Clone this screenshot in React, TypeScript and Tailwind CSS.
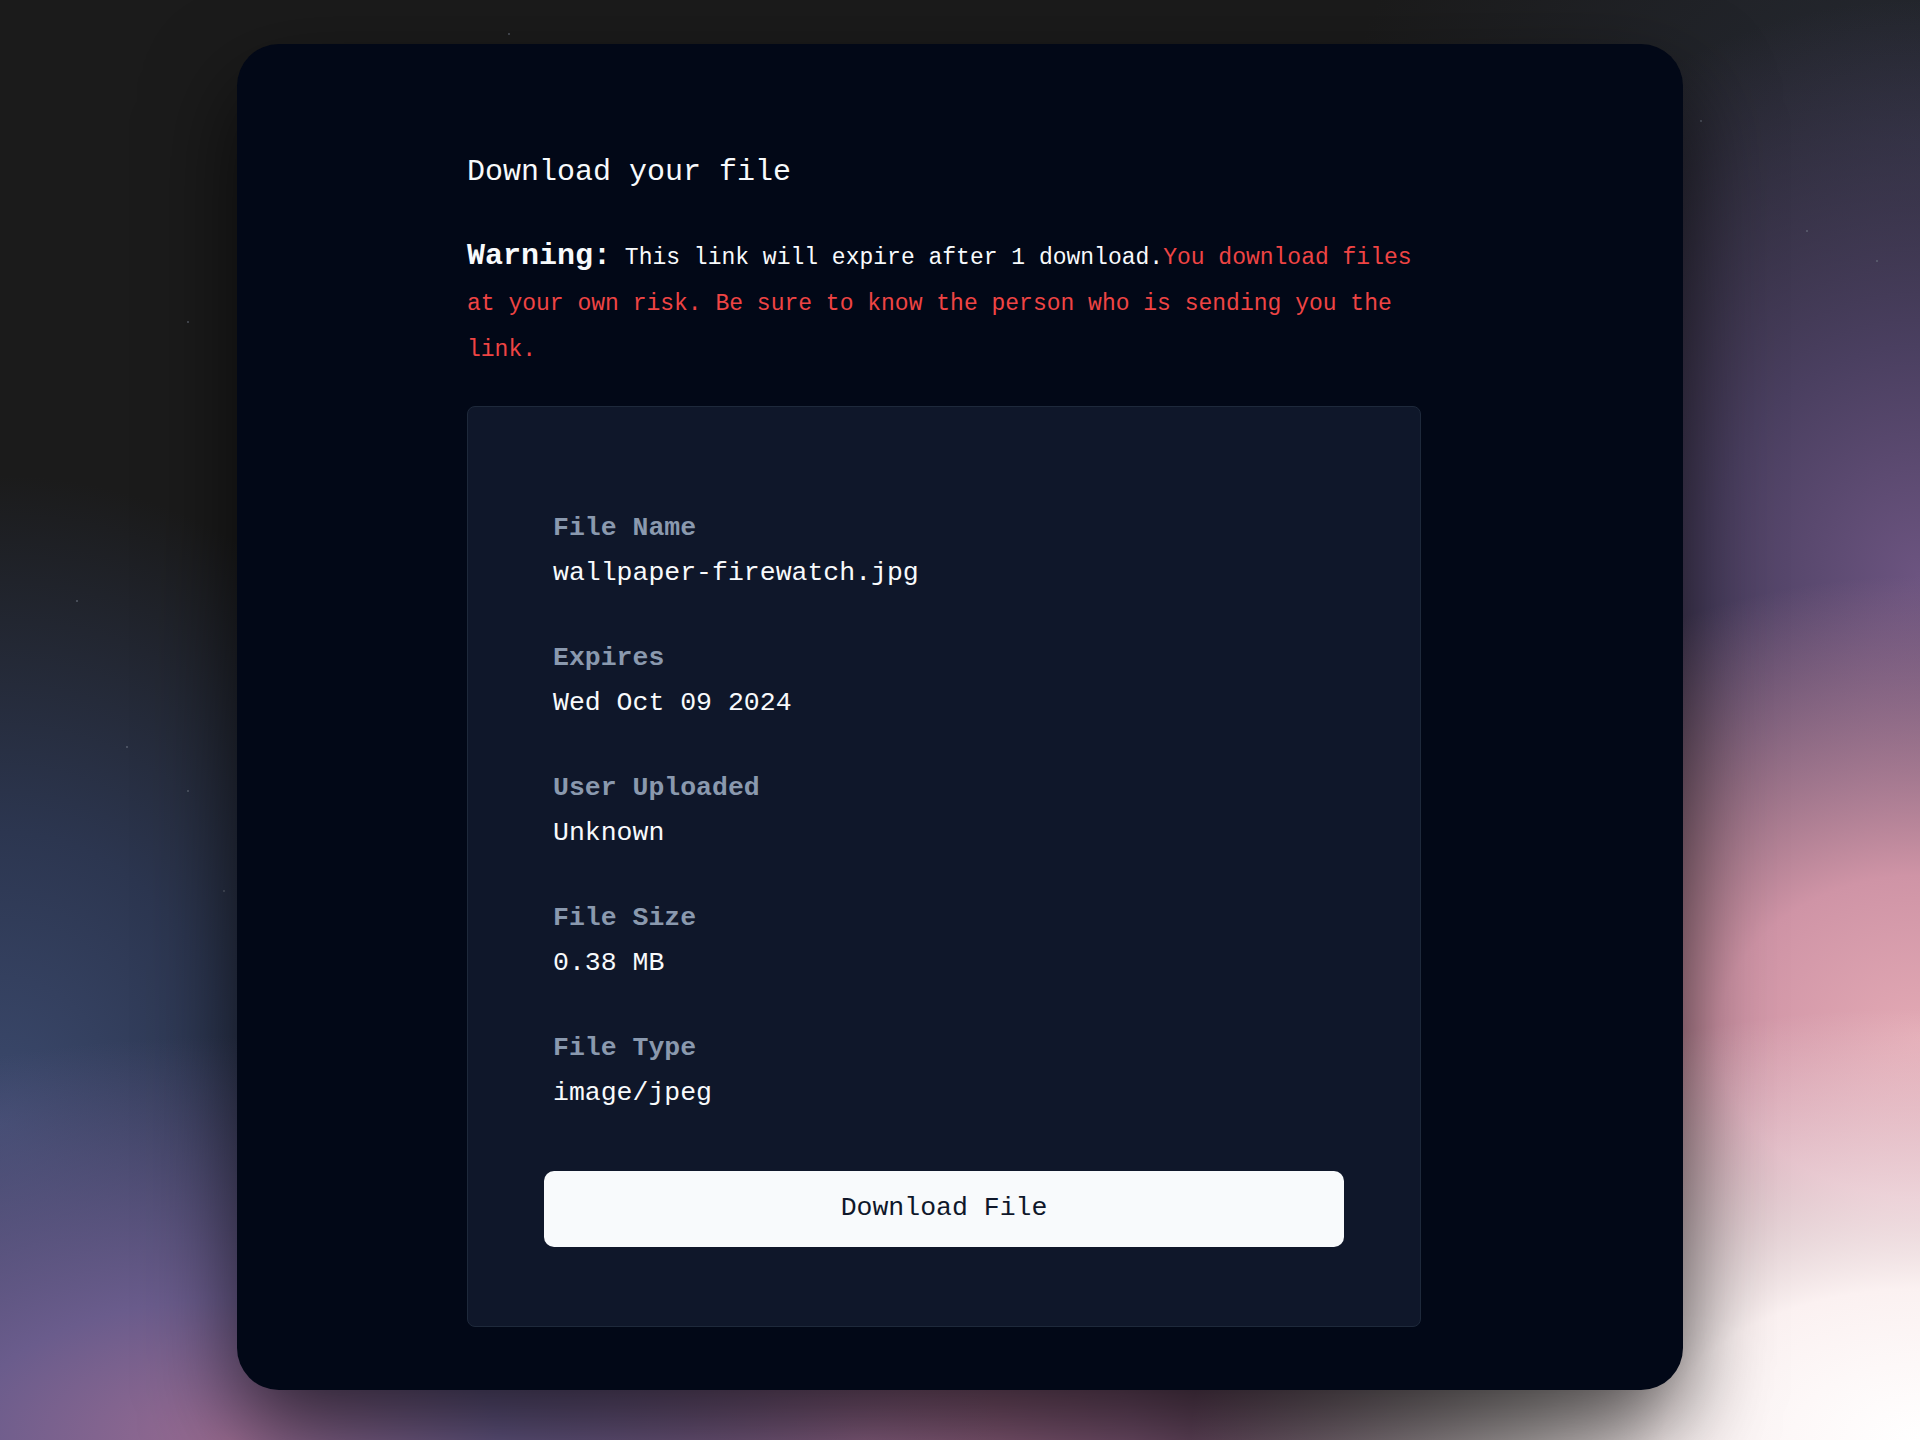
import React from 'react';

const details = [
  { label: 'File Name', value: 'wallpaper-firewatch.jpg' },
  { label: 'Expires', value: 'Wed Oct 09 2024' },
  { label: 'User Uploaded', value: 'Unknown' },
  { label: 'File Size', value: '0.38 MB' },
  { label: 'File Type', value: 'image/jpeg' },
];

// faint stars in the wallpaper
const stars = [
  { x: 508, y: 33 },
  { x: 187, y: 321 },
  { x: 76, y: 600 },
  { x: 126, y: 746 },
  { x: 187, y: 790 },
  { x: 223, y: 890 },
  { x: 1876, y: 260 },
  { x: 1806, y: 230 },
  { x: 1700, y: 120 },
];

export default function App() {
  return (
    <div className="relative w-[1920px] h-[1440px] overflow-hidden bg-[#1b1b1b] bg-[image:radial-gradient(ellipse_38%_30%_at_100%_100%,#ffffff_0%,#fbf1f1_35%,transparent_100%),radial-gradient(ellipse_30%_32%_at_100%_72%,#e3a9b4_0%,#cf94a6_35%,transparent_100%),radial-gradient(ellipse_28%_40%_at_100%_40%,#6c5480_0%,#4a3f60_40%,transparent_100%),radial-gradient(ellipse_40%_28%_at_12%_100%,#9a6c92_0%,#6a5c8c_35%,transparent_100%),radial-gradient(ellipse_35%_30%_at_45%_100%,#a06a8a_0%,#7a5472_40%,transparent_100%),radial-gradient(ellipse_28%_45%_at_0%_78%,#3c4a6e_0%,#2c3650_45%,transparent_100%),radial-gradient(ellipse_30%_30%_at_100%_10%,#262a34_0%,transparent_100%)]">
      {stars.map((s, i) => (
        <div
          key={i}
          className="absolute w-[2px] h-[2px] rounded-full bg-[#6b7280]/70"
          style={{ left: s.x, top: s.y }}
        />
      ))}

      {/* Card */}
      <div className="relative mx-auto mt-[44px] w-[1446px] h-[1346px] rounded-[42px] bg-[#020817] shadow-[0_40px_90px_rgba(0,0,0,0.65)] pt-[106px] pl-[230px] font-['Liberation_Mono',monospace]">
        <div className="w-[954px] flex flex-col">
          <h1 className="text-[30px] leading-[45px] text-[#f8fafc] font-normal">Download your file</h1>

          <p className="mt-[38px] text-[23px] leading-[46px] text-[#f8fafc]">
            <span className="text-[30px] font-bold">Warning:</span> This link will expire after 1 download.
            <span className="text-[#ef4444]">You download files at your own risk. Be sure to know the person who is sending you the link.</span>
          </p>

          {/* Details box */}
          <div className="mt-[33px] rounded-lg border border-[#1e293b] bg-[#0f172a] pt-[99px] pb-[79px] px-[76px] flex flex-col">
            <div className="pl-[9px] flex flex-col gap-[40px]">
              {details.map((d) => (
                <div key={d.label} className="flex flex-col text-[26.5px] leading-[45px]">
                  <span className="font-bold text-[#8a99ae]">{d.label}</span>
                  <span className="text-[#f8fafc]">{d.value}</span>
                </div>
              ))}
            </div>

            <button className="mt-[55px] h-[76px] w-full rounded-[10px] bg-[#f8fafc] text-[#0f172a] text-[26.5px]">
              Download File
            </button>
          </div>
        </div>
      </div>
    </div>
  );
}
